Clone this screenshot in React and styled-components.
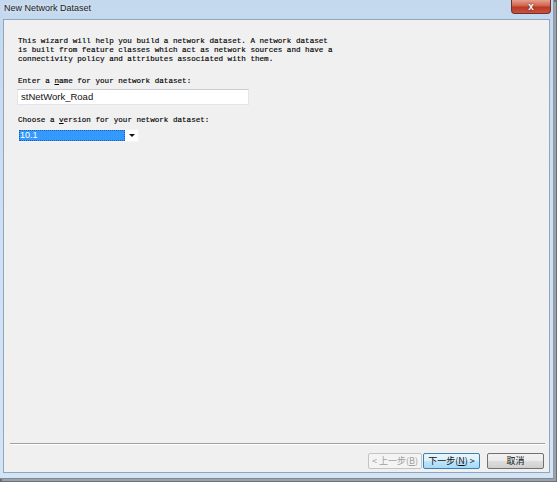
import React from 'react'
import styled, { createGlobalStyle } from "styled-components"

const Global = createGlobalStyle`
  html, body {
    margin: 0;
    padding: 0;
    background: #6b6f75;
  }
  #root {
    width: 557px;
    height: 482px;
    overflow: hidden;
  }
`

const Frame = styled.div`
    width: 554px;
    height: 479px;
    box-sizing: border-box;
    display: flex;
    flex-direction: column;
    background: linear-gradient(180deg, #c4d8ee 0%, #cddff2 40%, #d5e4f4 100%);
    border-right: 1px solid #8c9bad;
    border-bottom: 1px solid #7d8a99;
    box-shadow: 2px 2px 0 #9aa2ac;
`

const TitleBar = styled.div`
    height: 19px;
    flex: none;
    display: flex;
    align-items: flex-start;
    padding-left: 4px;
    .title{
        font-family: "Liberation Sans", Arial, sans-serif;
        font-size: 9px;
        color: #1b1b1b;
        line-height: 17px;
        text-shadow: 0 0 4px #eef5fd;
    }
`

const CloseButton = styled.div`
    margin-left: auto;
    margin-right: 2px;
    width: 40px;
    height: 14px;
    box-sizing: border-box;
    border: 1px solid #6e3030;
    border-top: none;
    border-radius: 0 0 4px 4px;
    background: linear-gradient(180deg, #e6a08f 0%, #d2624d 45%, #b83a26 55%, #c9533c 100%);
    display: flex;
    align-items: center;
    justify-content: center;
    color: #fff;
    font-family: "Liberation Sans", Arial, sans-serif;
    font-weight: 700;
    font-size: 10px;
    line-height: 1;
    text-shadow: 0 0 2px #5a1a10;
`

const Client = styled.div`
    flex: 1;
    margin: 0 3px 5px 3px;
    box-sizing: border-box;
    border: 1px solid #8fa6c2;
    background: #f0f0f0;
    display: flex;
    flex-direction: column;
`

const Page = styled.div`
    flex: 1;
    padding: 17px 15px 0 14px;
    display: flex;
    flex-direction: column;
    align-items: flex-start;
`

const MonoText = styled.div`
    font-family: "Liberation Mono", "Courier New", monospace;
    font-size: 7.6px;
    line-height: 9px;
    color: #000;
    white-space: pre;
    margin-top: ${p => p.$top || 0}px;
    -webkit-text-stroke: 0.15px #000;
    u{
        text-decoration: underline;
    }
`

const TextInput = styled.div`
    margin-top: 3px;
    width: 232px;
    height: 16px;
    box-sizing: border-box;
    margin-left: -1px;
    background: #fff;
    border: 1px solid #e2e6ea;
    border-top-color: #c9ccd1;
    padding-left: 3px;
    font-family: "Liberation Sans", Arial, sans-serif;
    font-size: 9.5px;
    line-height: 14px;
    color: #111;
`

const Select = styled.div`
    margin-top: 4px;
    width: 121px;
    height: 13px;
    box-sizing: border-box;
    display: flex;
    background: #fff;
    border: 1px solid #f4f4f4;
    .value{
        width: 106px;
        background: #3399ff;
        color: #fff;
        font-family: "Liberation Sans", Arial, sans-serif;
        font-size: 9px;
        line-height: 11px;
        padding-left: 1px;
        box-sizing: border-box;
        outline: 1px dotted #1e5fa8;
        outline-offset: -1px;
    }
    .arrow{
        flex: 1;
        display: flex;
        align-items: center;
        justify-content: center;
    }
`

const Separator = styled.div`
    margin: 0 4px 0 6px;
    height: 1px;
    background: #a0a0a0;
    border-bottom: 1px solid #fff;
`

const ButtonRow = styled.div`
    display: flex;
    justify-content: flex-end;
    padding: 8px 5px 3px 0;
`

const DlgButton = styled.div`
    width: ${p => p.$w}px;
    height: 16px;
    box-sizing: border-box;
    margin-left: ${p => p.$gap || 0}px;
    border: 1px solid ${p => p.$focus ? "#3c7fb1" : p.$disabled ? "#c4c4c4" : "#707070"};
    border-radius: 2px;
    background: ${p => p.$focus
        ? "linear-gradient(180deg, #eaf6fd 0%, #d9f0fc 50%, #bee6fd 51%, #a7d9f5 100%)"
        : p.$disabled
            ? "#f4f4f4"
            : "linear-gradient(180deg, #f2f2f2 0%, #ebebeb 50%, #dddddd 51%, #cfcfcf 100%)"};
    color: ${p => p.$disabled ? "#a0a0a0" : "#111"};
    font-family: "Noto Sans CJK SC", "Liberation Sans", sans-serif;
    font-size: 9px;
    line-height: 14px;
    display: flex;
    align-items: center;
    justify-content: center;
    white-space: nowrap;
`

const App = () => {
    return (
        <>
            <Global />
            <Frame>
                <TitleBar>
                    <span className="title">New Network Dataset</span>
                    <CloseButton>x</CloseButton>
                </TitleBar>
                <Client>
                    <Page>
                        <MonoText $top={0}>
                            {"This wizard will help you build a network dataset. A network dataset\nis built from feature classes which act as network sources and have a\nconnectivity policy and attributes associated with them."}
                        </MonoText>
                        <MonoText $top={13}>Enter a <u>n</u>ame for your network dataset:</MonoText>
                        <TextInput>stNetWork_Road</TextInput>
                        <MonoText $top={11}>Choose a <u>v</u>ersion for your network dataset:</MonoText>
                        <Select>
                            <div className="value">10.1</div>
                            <div className="arrow">
                                <svg width="6" height="3" viewBox="0 0 6 3">
                                    <path d="M0 0 L6 0 L3 3 Z" fill="#111" />
                                </svg>
                            </div>
                        </Select>
                    </Page>
                    <Separator />
                    <ButtonRow>
                        <DlgButton $w={54} $disabled>&lt; 上一步(<u>B</u>)</DlgButton>
                        <DlgButton $w={57} $gap={1} $focus>下一步(<u>N</u>) &gt;</DlgButton>
                        <DlgButton $w={57} $gap={7}>取消</DlgButton>
                    </ButtonRow>
                </Client>
            </Frame>
        </>
    )
}

export default App
